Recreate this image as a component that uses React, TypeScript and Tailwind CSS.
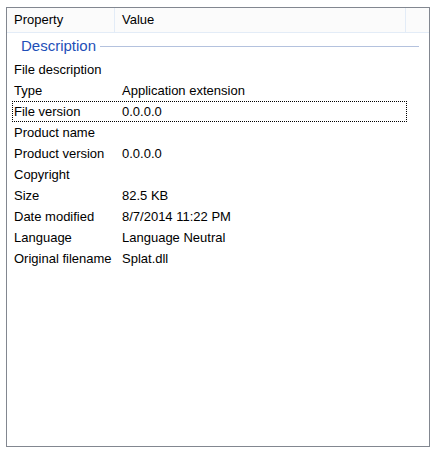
const rows: [string, string][] = [
  ['File description', ''],
  ['Type', 'Application extension'],
  ['File version', '0.0.0.0'],
  ['Product name', ''],
  ['Product version', '0.0.0.0'],
  ['Copyright', ''],
  ['Size', '82.5 KB'],
  ['Date modified', '8/7/2014 11:22 PM'],
  ['Language', 'Language Neutral'],
  ['Original filename', 'Splat.dll'],
]

export default function App() {
  return (
    <div className="w-[437px] h-[454px] bg-white pt-[7px] pl-[6px] font-['Liberation_Sans',Arial,sans-serif] text-[13px] text-[#000]">
      <div className="w-[424px] h-[440px] border border-[#828790] bg-white flex flex-col">
        {/* column header */}
        <div className="h-[25px] flex border-b border-[#e3ecf7] bg-[#fbfbfb]">
          <div className="w-[108px] pl-[7px] flex items-center border-r border-[#e3ecf7]">Property</div>
          <div className="w-[291px] pl-[7px] flex items-center border-r border-[#e3ecf7]">Value</div>
          <div className="flex-1" />
        </div>

        {/* group */}
        <div className="h-[26px] flex items-center pl-[14px] pr-[10px] gap-[4px]">
          <span className="text-[15px] text-[#1e4fb8]">Description</span>
          <div className="flex-1 h-px bg-[#b4c2de] mt-[1px]" />
        </div>

        {rows.map(([k, v], i) => (
          <div
            key={k}
            className={
              'ml-[5px] w-[395px] h-[21px] flex items-center border ' +
              (i === 2 ? 'border-dotted border-black' : 'border-transparent')
            }
          >
            <div className="w-[109px] pl-[1px] whitespace-nowrap">{k}</div>
            <div className="whitespace-nowrap">{v}</div>
          </div>
        ))}
      </div>
    </div>
  )
}
